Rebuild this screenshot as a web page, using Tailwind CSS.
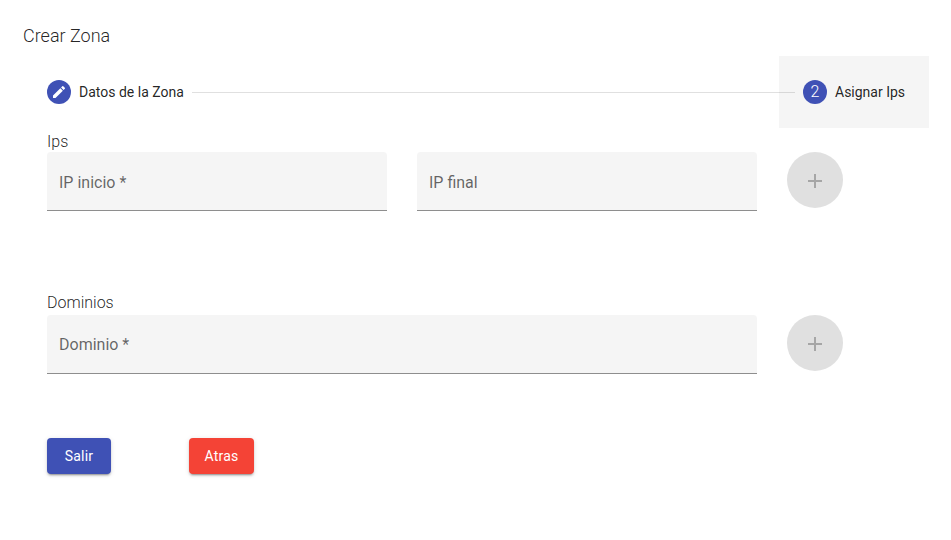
<!DOCTYPE html>
<html lang="es">
<head>
  <meta charset="UTF-8" />
  <meta name="viewport" content="width=device-width, initial-scale=1.0"/>
  <title>Crear Zona</title>
  <script src="https://cdn.jsdelivr.net/npm/@tailwindcss/browser@4"></script>
</head>
<body class="bg-white font-['Roboto',sans-serif] text-black/87 overflow-hidden">
  <div class="w-[951px] h-[540px] pl-[23px] pr-[22px] pt-[24px]">
    <h1 class="text-[18px] leading-[24px] font-light">Crear Zona</h1>

    <!-- stepper -->
    <div class="flex items-center h-[72px] mt-[8px]">
      <div class="flex items-center h-full pl-[24px] pr-[8px]">
        <span class="flex items-center justify-center w-[24px] h-[24px] rounded-full bg-[#3f51b5]">
          <svg class="w-[16px] h-[16px]" viewBox="0 0 24 24" fill="#fff"><path d="M3 17.25V21h3.75L17.81 9.94l-3.75-3.75L3 17.25zM20.71 7.04a1 1 0 0 0 0-1.41l-2.34-2.34a1 1 0 0 0-1.41 0l-1.83 1.83 3.75 3.75 1.83-1.83z"/></svg>
        </span>
        <span class="ml-[8px] text-[14px]">Datos de la Zona</span>
      </div>
      <div class="flex-1 mr-[8px] border-t border-black/12 relative z-10"></div>
      <div class="flex items-center h-full w-[150px] ml-[-24px] pl-[24px] bg-[#f5f5f5]">
        <span class="flex items-center justify-center w-[24px] h-[24px] rounded-full bg-[#3f51b5] text-white text-[16px] font-light">2</span>
        <span class="ml-[8px] text-[14px]">Asignar Ips</span>
      </div>
    </div>

    <div class="pl-[24px]">
      <div class="mt-[3px] text-[16px] leading-[21px] font-light">Ips</div>
      <div class="flex items-start gap-[30px]">
        <div class="w-[340px] h-[59px] flex items-center pl-[12px] pt-[3px] bg-[#f5f5f5] rounded-t-[4px] border-b border-black/42 text-[16px] text-black/60">IP inicio *</div>
        <div class="w-[340px] h-[59px] flex items-center pl-[12px] pt-[3px] bg-[#f5f5f5] rounded-t-[4px] border-b border-black/42 text-[16px] text-black/60">IP final</div>
        <button class="flex items-center justify-center w-[56px] h-[56px] rounded-full bg-[#e0e0e0]">
          <svg class="w-[24px] h-[24px] mt-[1px]" viewBox="0 0 24 24" fill="#a6a6a6"><path d="M19 13h-6v6h-2v-6H5v-2h6V5h2v6h6v2z"/></svg>
        </button>
      </div>

      <div class="mt-[81px] mb-[2px] text-[16px] leading-[21px] font-light">Dominios</div>
      <div class="flex items-start gap-[30px]">
        <div class="w-[710px] h-[59px] flex items-center pl-[12px] pt-[1px] bg-[#f5f5f5] rounded-t-[4px] border-b border-black/42 text-[16px] text-black/60">Dominio *</div>
        <button class="flex items-center justify-center w-[56px] h-[56px] rounded-full bg-[#e0e0e0]">
          <svg class="w-[24px] h-[24px] mt-[1px]" viewBox="0 0 24 24" fill="#a6a6a6"><path d="M19 13h-6v6h-2v-6H5v-2h6V5h2v6h6v2z"/></svg>
        </button>
      </div>

      <div class="flex mt-[64px]">
        <button class="w-[64px] h-[36px] rounded-[4px] bg-[#3f51b5] text-white text-[14px] tracking-[0.2px] shadow-[0_3px_1px_-2px_rgba(0,0,0,.2),0_2px_2px_0_rgba(0,0,0,.14),0_1px_5px_0_rgba(0,0,0,.12)]">Salir</button>
        <button class="w-[65px] h-[36px] ml-[78px] rounded-[4px] bg-[#f44336] text-white text-[14px] tracking-[0.2px] shadow-[0_3px_1px_-2px_rgba(0,0,0,.2),0_2px_2px_0_rgba(0,0,0,.14),0_1px_5px_0_rgba(0,0,0,.12)]">Atras</button>
      </div>
    </div>
  </div>
</body>
</html>
